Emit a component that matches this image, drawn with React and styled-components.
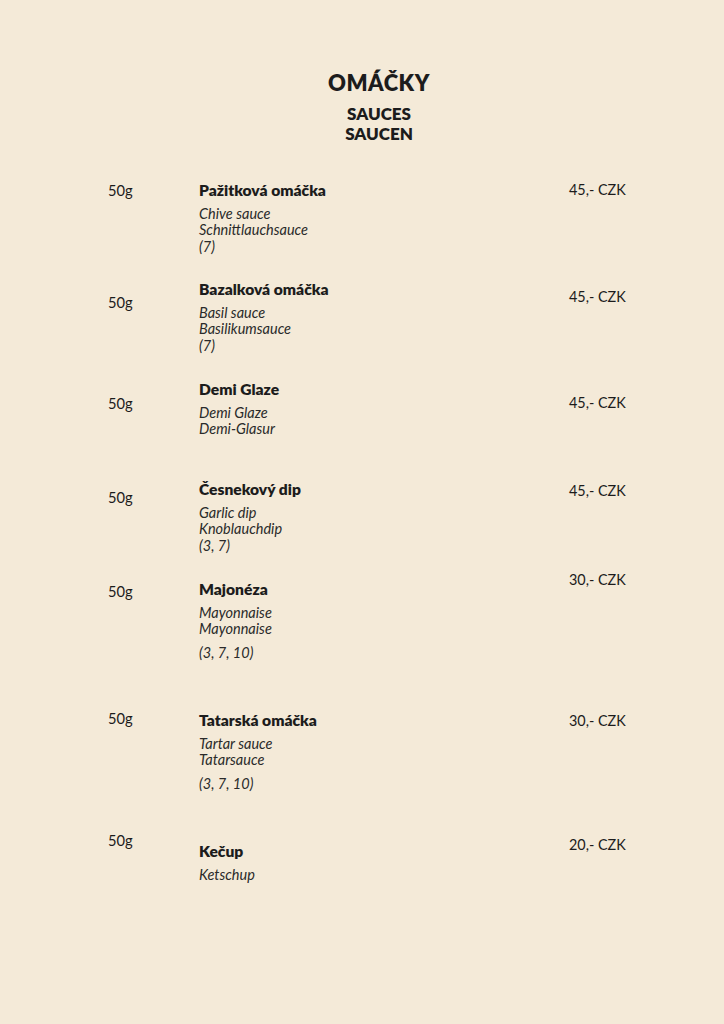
import React from 'react';
import styled, { createGlobalStyle } from 'styled-components';

const GlobalStyle = createGlobalStyle`
  html, body {
    margin: 0;
    padding: 0;
    background: #f4ead8;
  }
  body {
    font-family: Lato, "Noto Sans", sans-serif;
    color: #1c1c1c;
  }
`;

const items = [
  { w: 'Pažitková omáčka', d: ['Chive sauce', 'Schnittlauchsauce'], a: '(7)', p: '45,- CZK', h: 99, sw: 0, sn: 0, sp: 0 },
  { w: 'Bazalková omáčka', d: ['Basil sauce', 'Basilikumsauce'], a: '(7)', p: '45,- CZK', h: 100, sw: 13, sn: 0, sp: 8 },
  { w: 'Demi Glaze', d: ['Demi Glaze', 'Demi-Glasur'], p: '45,- CZK', h: 100, sw: 14, sn: 0, sp: 14 },
  { w: 'Česnekový dip', d: ['Garlic dip', 'Knoblauchdip'], a: '(3, 7)', p: '45,- CZK', h: 91, sw: 8, sn: 0, sp: 2 },
  { w: 'Majonéza', d: ['Mayonnaise', 'Mayonnaise'], a: '(3, 7, 10)', gap: true, p: '30,- CZK', h: 138, sw: 11, sn: 9, sp: 0 },
  { w: 'Tatarská omáčka', d: ['Tartar sauce', 'Tatarsauce'], a: '(3, 7, 10)', gap: true, p: '30,- CZK', h: 122, sw: 0, sn: 2, sp: 3 },
  { w: 'Kečup', d: ['Ketschup'], p: '20,- CZK', h: 80, sw: 0, sn: 11, sp: 5 },
];

function App() {
  return (
    <Page>
      <GlobalStyle />
      <Header>
        <Title>OMÁČKY</Title>
        <Sub>SAUCES</Sub>
        <Sub>SAUCEN</Sub>
      </Header>
      <List>
        {items.map((it, i) => (
          <Row key={i} $h={it.h}>
            <Weight $shift={it.sw}>50g</Weight>
            <Body $shift={it.sn}>
              <Name>{it.w}</Name>
              <Desc>
                {it.d.map((l, j) => <div key={j}>{l}</div>)}
                {it.a && <Allergens $gap={it.gap}>{it.a}</Allergens>}
              </Desc>
            </Body>
            <Price $shift={it.sp}>{it.p}</Price>
          </Row>
        ))}
      </List>
    </Page>
  );
}

const Page = styled.div`
  width: 724px;
  min-height: 1024px;
  background: #f4ead8;
  box-sizing: border-box;
  padding-top: 70px;
`;

const Header = styled.header`
  display: flex;
  flex-direction: column;
  align-items: center;
  padding-left: 34px;
  margin-bottom: 38px;
`;

const Title = styled.h1`
  margin: 0 0 8px;
  font-size: 22px;
  line-height: 26px;
  font-weight: 800;
  letter-spacing: 0.5px;
`;

const Sub = styled.div`
  font-size: 17px;
  line-height: 20px;
  font-weight: 800;
`;

const List = styled.div`
  display: flex;
  flex-direction: column;
  padding-left: 108px;
`;

const Row = styled.div`
  display: grid;
  grid-template-columns: 91px 370px 60px;
  height: ${p => p.$h}px;
`;

const Weight = styled.div`
  padding-top: ${p => p.$shift}px;
  font-size: 14.7px;
  line-height: 16px;
`;

const Body = styled.div`
  padding-top: ${p => p.$shift}px;
`;

const Name = styled.div`
  font-size: 15.6px;
  line-height: 16px;
  font-weight: 800;
  margin-bottom: 8px;
`;

const Desc = styled.div`
  font-size: 14.5px;
  line-height: 16.3px;
  font-style: italic;
  color: #2a2a2a;
`;

const Allergens = styled.div`
  margin-top: ${p => (p.$gap ? '7px' : '0')};
`;

const Price = styled.div`
  padding-top: ${p => p.$shift}px;
  font-size: 14.4px;
  line-height: 16px;
  white-space: nowrap;
`;

export default App;
